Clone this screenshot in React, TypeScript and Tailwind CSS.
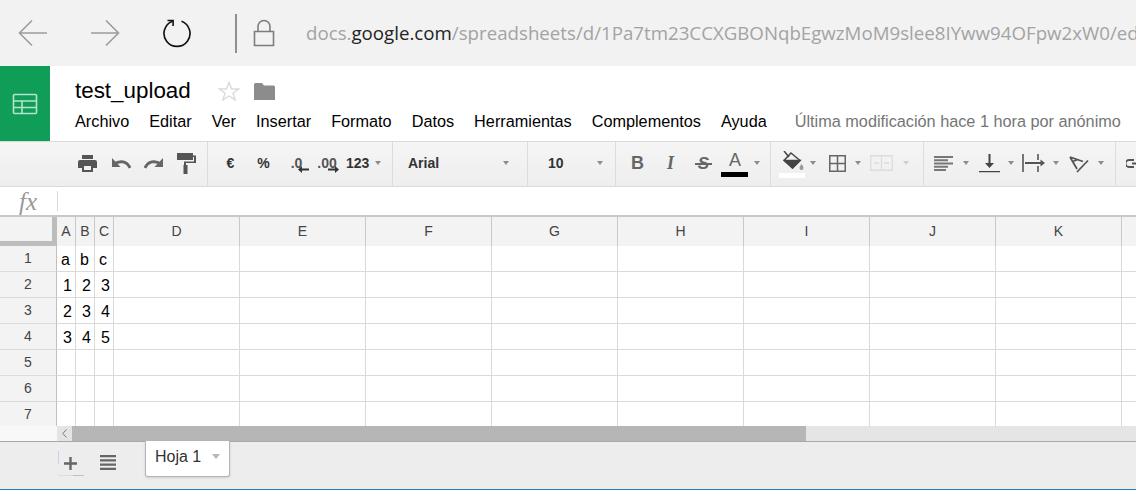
import React from 'react';

const SANS = { fontFamily: '"Liberation Sans", Arial, sans-serif' };
const COLUMNS = [
  { name: 'A', w: 19 },
  { name: 'B', w: 19 },
  { name: 'C', w: 19 },
  { name: 'D', w: 126 },
  { name: 'E', w: 126 },
  { name: 'F', w: 126 },
  { name: 'G', w: 126 },
  { name: 'H', w: 126 },
  { name: 'I', w: 126 },
  { name: 'J', w: 126 },
  { name: 'K', w: 126 },
  { name: '', w: 60 },
];
const ROWS = [
  ['a', 'b', 'c'],
  ['1', '2', '3'],
  ['2', '3', '4'],
  ['3', '4', '5'],
  [],
  [],
  [],
];
const MENUS = ['Archivo', 'Editar', 'Ver', 'Insertar', 'Formato', 'Datos', 'Herramientas', 'Complementos', 'Ayuda'];

const Caret = ({ className = 'border-t-[#8c8c8c]' }: { className?: string }) => (
  <span className={`inline-block w-0 h-0 mr-px shrink-0 border-x-[3px] border-x-transparent border-t-[4px] ${className}`} />
);

const Sep = () => <div className="w-px self-stretch -mb-[2px] bg-[#dcdcdc] shrink-0" />;

const Gap = ({ w }: { w: number }) => <div className="shrink-0" style={{ width: w }} />;

// fixed width toolbar slot, content centered
const Slot = ({ w, children }: { w: number; children: React.ReactNode }) => (
  <div className="flex items-center justify-center shrink-0 h-full" style={{ width: w }}>
    {children}
  </div>
);

const BrowserBar = () => (
  <div className="h-[66px] bg-[#f2f2f2] flex items-center shrink-0 overflow-hidden">
    <svg width="30" height="28" viewBox="0 0 30 28" className="ml-[18px] shrink-0" fill="none" stroke="#9c9c9c" strokeWidth="1.6">
      <path d="M29 14H2M14 1.5 1.500 14 14 26.500" />
    </svg>
    <svg width="30" height="28" viewBox="0 0 30 28" className="ml-[42px] shrink-0" fill="none" stroke="#9c9c9c" strokeWidth="1.6">
      <path d="M1 14h27M16 1.500 28.500 14 16 26.500" />
    </svg>
    <svg width="30" height="30" viewBox="0 0 30 30" className="ml-[42px] shrink-0" fill="none" stroke="#111" strokeWidth="1.6">
      <path d="M10.500 3.200A13 13 0 1 0 19.500 3.200" />
      <path d="M5.500 2.500h5.600v5.600" />
    </svg>
    <div className="w-[2px] h-[39px] bg-[#8f8f8f] ml-[43px] shrink-0" />
    <svg width="22" height="28" viewBox="0 0 22 28" className="ml-[16px] shrink-0" fill="none" stroke="#7d7d7d" strokeWidth="1.6">
      <path d="M1.500 12.500h19v14h-19zM5 12.500V7.500a6 6 0 0 1 12 0v5" />
    </svg>
    <div className="ml-[31px] text-[18.7px] whitespace-nowrap text-[#a3a3a3]" style={{ fontFamily: '"Open Sans", sans-serif' }}>
      docs.<span className="text-[#222]">google.com</span>/spreadsheets/d/1Pa7tm23CCXGBONqbEgwzMoM9slee8IYww94OFpw2xW0/ed
    </div>
  </div>
);

const DocHeader = () => (
  <div className="h-[75px] bg-white flex shrink-0">
    <div className="w-[50px] bg-[#0f9d58] flex items-center justify-center shrink-0">
      <svg width="26" height="22" viewBox="0 0 26 22" fill="none" stroke="#b5e3cb" strokeWidth="1.6">
        <rect x="1.500" y="1.500" width="23" height="19" rx="1" />
        <path d="M1.500 8h23M1.500 14.500h23M10 8v12.500" />
      </svg>
    </div>
    <div className="pl-[25px] flex flex-col min-w-0">
      <div className="flex items-center h-[37px] pt-[13px]">
        <span className="text-[22.4px] leading-none text-black">test_upload</span>
        <svg width="22" height="20" viewBox="0 0 22 20" className="ml-[27px]" fill="none" stroke="#dadada" strokeWidth="1.4">
          <path d="M11 1.500 13.600 8h7l-5.600 4.200 2.100 6.800L11 15l-6.100 4 2.100-6.800L1.400 8h7z" />
        </svg>
        <svg width="21" height="17" viewBox="0 0 21 17" className="ml-[14px]" fill="#8c8c8c">
          <path d="M0 1.500Q0 0 1.500 0H8l2 2.500h9.500Q21 2.500 21 4v13H0z" />
        </svg>
      </div>
      <div className="flex items-center gap-[20px] h-[32px] text-[16.25px] text-black whitespace-nowrap pt-[4px]">
        {MENUS.map(m => (
          <span key={m}>{m}</span>
        ))}
        <span className="text-[#757575] ml-[8px]">Última modificación hace 1 hora por anónimo</span>
      </div>
    </div>
  </div>
);

const Toolbar = () => (
  <div className="h-[46px] shrink-0 border-y border-[#dadada] bg-gradient-to-b from-[#f5f5f5] to-[#eeeeee] flex items-center overflow-hidden pb-[2px] text-[14px] font-bold text-[#333] whitespace-nowrap">
    <Gap w={71} />
    <Slot w={33}>
      <svg width="19" height="17" viewBox="0 0 19 17" fill="#555">
        <path d="M4 0h11v4H4zM2 5h15a2 2 0 0 1 2 2v6h-4v4H4v-4H0V7a2 2 0 0 1 2-2zm4 6v4h7v-4z" />
      </svg>
    </Slot>
    <Slot w={33}>
      <svg width="20" height="12" viewBox="0 0 20 12" fill="none" stroke="#666" strokeWidth="3">
        <path d="M19 11C16 4 9 3 3 7" />
        <path d="M1 1v9h8.500z" fill="#666" stroke="none" />
      </svg>
    </Slot>
    <Slot w={33}>
      <svg width="20" height="12" viewBox="0 0 20 12" fill="none" stroke="#666" strokeWidth="3">
        <path d="M1 11C4 4 11 3 17 7" />
        <path d="M19 1v9h-8.500z" fill="#666" stroke="none" />
      </svg>
    </Slot>
    <Slot w={33}>
      <svg width="19" height="21" viewBox="0 0 19 21" fill="#555">
        <path d="M0 0h16v7H0zM16 2.500h3V10H9v2.500H7V8.500h10V4h-1zM6.500 12h4v9h-4z" />
      </svg>
    </Slot>
    <Gap w={4} />
    <Sep />
    <Gap w={6} />
    <Slot w={33}>€</Slot>
    <Slot w={33}>%</Slot>
    <Slot w={33}>
      <span className="relative text-[#555]">
        .0
        <svg width="11" height="7" viewBox="0 0 11 7" className="absolute left-[7px] top-[13px]" fill="#333">
          <path d="M11 2.500v2H4V7L0 3.500 4 0v2.500z" />
        </svg>
      </span>
    </Slot>
    <Slot w={28}>
      <span className="relative text-[#555]">
        .00
        <svg width="11" height="7" viewBox="0 0 11 7" className="absolute left-[11px] top-[13px]" fill="#333">
          <path d="M0 2.500v2h7V7l4-3.500L7 0v2.500z" />
        </svg>
      </span>
    </Slot>
    <Gap w={5} />
    <span className="w-[29px] shrink-0">123</span>
    <Caret />
    <Gap w={10} />
    <Sep />
    <Gap w={15} />
    <span className="w-[95px] shrink-0">Arial</span>
    <Caret />
    <Gap w={17} />
    <Sep />
    <Gap w={20} />
    <span className="w-[49px] shrink-0">10</span>
    <Caret />
    <Gap w={11} />
    <Sep />
    <Gap w={5} />
    <Slot w={33}>
      <span className="text-[#666] text-[18px] font-bold leading-none">B</span>
    </Slot>
    <Slot w={33}>
      <span className="text-[#666] text-[18px] font-bold italic leading-none" style={{ fontFamily: '"Liberation Serif", serif' }}>I</span>
    </Slot>
    <Slot w={33}>
      <span className="relative text-[#666] text-[17px] font-bold italic leading-none">
        S
        <span className="absolute left-[-3px] right-[-3px] top-[8px] h-[2px] bg-[#666]" />
      </span>
    </Slot>
    <div className="relative w-[30px] h-full flex items-start justify-center shrink-0 pt-[8px]">
      <span className="text-[#666] text-[18px] font-normal leading-[20px]">A</span>
      <div className="absolute left-[1px] top-[30px] w-[27px] h-[5px] bg-black" />
    </div>
    <Gap w={4} />
    <Caret />
    <Gap w={9} />
    <Sep />
    <Gap w={8} />
    <div className="relative w-[27px] h-full shrink-0 flex items-start justify-center pt-[9px]">
      <svg width="22" height="20" viewBox="0 0 22 20" fill="none" stroke="#444" strokeWidth="1.500">
        <path d="M2 0 7 6" />
        <path d="M9 2 18 9.500 10.500 17 2 9.500z" />
        <path d="M3 9.500h15l-7.500 7.500z" fill="#444" />
        <path d="M19.500 13c1 1.500 2 2.700 2 4a2 2 0 0 1-4 0c0-1.300 1-2.500 2-4z" fill="#999" stroke="none" />
      </svg>
      <div className="absolute left-0 top-[31px] w-[26px] h-[5px] bg-white" />
    </div>
    <Gap w={4} />
    <Caret />
    <Gap w={12} />
    <svg width="17" height="17" viewBox="0 0 17 17" className="shrink-0" fill="none" stroke="#666" strokeWidth="1.500">
      <path d="M.750.750h15.500v15.500H.750zM8.500 1v15M1 8.500h15" />
    </svg>
    <Gap w={9} />
    <Caret />
    <Gap w={8} />
    <svg width="23" height="16" viewBox="0 0 23 16" className="shrink-0" fill="none" stroke="#dcdcdc" strokeWidth="1.300">
      <path d="M.750.750h21.500v14.500H.750zM11.500 1v14M4 8h5M19 8h-5" />
    </svg>
    <Gap w={10} />
    <Caret className="border-t-[#cfcfcf]" />
    <Gap w={13} />
    <Sep />
    <Gap w={10} />
    <svg width="19" height="15" viewBox="0 0 19 15" className="shrink-0" fill="#777">
      <path d="M0 0h19v2H0zM0 3.200h14v2H0zM0 6.500h19v2H0zM0 9.700h14v2H0zM0 13h12v2H0z" />
    </svg>
    <Gap w={10} />
    <Caret />
    <Gap w={9} />
    <svg width="21" height="20" viewBox="0 0 21 20" className="shrink-0" fill="#444">
      <path d="M9.500 1h2v9h3.500l-4.500 5L6 10h3.500zM0 18h21v1.300H0z" />
    </svg>
    <Gap w={8} />
    <Caret />
    <Gap w={7} />
    <svg width="24" height="18" viewBox="0 0 24 18" className="shrink-0" fill="none" stroke="#555" strokeWidth="1.600">
      <path d="M1 0v18M16 0v6M16 12v6" />
      <path d="M3 9h16" strokeWidth="2" />
      <path d="m18.500 5.500 4.500 3.500-4.500 3.500z" fill="#555" stroke="none" />
    </svg>
    <Gap w={7} />
    <Caret />
    <Gap w={9} />
    <svg width="20" height="19" viewBox="0 0 20 19" className="shrink-0" fill="none" stroke="#555" strokeWidth="1.800">
      <path d="M1 3 14 7.500M1 3 8 15M3.500 7.500 9 5.500" />
      <path d="M19 6.500 8 18" />
    </svg>
    <Gap w={9} />
    <Caret />
    <Gap w={10} />
    <Sep />
    <Gap w={10} />
    <svg width="14" height="9" viewBox="0 0 14 9" className="shrink-0" fill="none" stroke="#555" strokeWidth="2">
      <path d="M8 1H3a2.500 2.500 0 0 0 0 7h5M6 4.500h8" />
    </svg>
  </div>
);

const FormulaBar = () => (
  <div className="h-[28px] bg-white flex items-center shrink-0">
    <div className="w-[57px] h-full flex items-center justify-center shrink-0 pr-[1px]">
      <span className="text-[25px] leading-none italic text-[#999]" style={{ fontFamily: '"Liberation Serif", serif' }}>fx</span>
    </div>
    <div className="w-px h-[20px] bg-[#d9d9d9]" />
  </div>
);

const Sheet = () => (
  <div className="flex-1 min-h-0 overflow-hidden border-t-2 border-[#c8c8c8] bg-white">
    <div className="flex h-[29px] bg-[#f3f3f3]">
      <div className="w-[57px] shrink-0 border-r-[5px] border-b-[5px] border-[#bdbdbd]" />
      {COLUMNS.map((col, i) => (
        <div
          key={i}
          className="shrink-0 border-r border-[#c9c9c9] flex items-center justify-center text-[14px] text-[#444]"
          style={{ width: col.w }}
        >
          {col.name}
        </div>
      ))}
    </div>
    {ROWS.map((row, r) => (
      <div key={r} className="flex h-[26px]">
        <div className="w-[57px] shrink-0 bg-[#f3f3f3] border-r border-b border-r-[#c0c0c0] border-b-[#dcdcdc] flex items-center justify-center text-[14px] text-[#444]">
          {r + 1}
        </div>
        {COLUMNS.map((col, c) => (
          <div
            key={c}
            className={`shrink-0 border-r border-b border-[#dadada] flex items-center pt-[2px] text-[16px] text-black ${
              r === 0 ? 'justify-start pl-[4px]' : 'justify-end pr-[3px]'
            }`}
            style={{ width: col.w }}
          >
            {row[c]}
          </div>
        ))}
      </div>
    ))}
  </div>
);

const ScrollBar = () => (
  <div className="h-[16px] flex shrink-0 border-b border-[#a8a8a8] bg-[#e5e5e5]">
    <div className="w-[57px] bg-[#f8f8f8] shrink-0" />
    <div className="w-[15px] bg-[#e4e4e4] flex items-center justify-center shrink-0">
      <svg width="5" height="9" viewBox="0 0 5 9" fill="none" stroke="#777">
        <path d="M4.500.500.800 4.500l3.700 4" />
      </svg>
    </div>
    <div className="w-[734px] bg-[#b6b6b6] shrink-0" />
  </div>
);

const SheetBar = () => (
  <div className="h-[48px] shrink-0 bg-[#ededed] border-b border-[#2a7ab8] flex items-start">
    <div className="ml-[58px] mt-[9px] w-[26px] h-[25px] pr-[2px] flex items-center justify-center shrink-0 relative">
      <svg width="13" height="13" viewBox="0 0 13 13" fill="#666">
        <path d="M5.300 0h2.400v5.300H13v2.400H7.700V13H5.300V7.700H0V5.300h5.300z" />
      </svg>
      <div className="absolute left-0 top-0 w-px h-[13px] bg-[#c9cff0]" />
      <div className="absolute left-0 top-[24px] w-[15px] h-px bg-[#dcdcdc]" />
      <div className="absolute left-[15px] top-[24px] w-[11px] h-px bg-[#a6d4a8]" />
    </div>
    <svg width="16" height="15" viewBox="0 0 16 15" className="ml-[16px] mt-[13px] shrink-0" fill="#666">
      <path d="M0 0h16v2.200H0zM0 4.200h16v2.200H0zM0 8.500h16v2.200H0zM0 12.800h16V15H0z" />
    </svg>
    <div className="ml-[29px] -mt-px w-[85px] h-[36px] bg-white border border-t-0 border-[#b5b5b5] rounded-b-[3px] shadow-sm flex items-center shrink-0 pl-[9px] pb-[4px] text-[16px] text-[#333]">
      <span className="w-[57px]">Hoja 1</span>
      <span className="inline-block w-0 h-0 border-x-[4px] border-x-transparent border-t-[5px] border-t-[#b8b8b8]" />
    </div>
  </div>
);

export default function App() {
  return (
    <div className="w-[1136px] h-[490px] flex flex-col overflow-hidden bg-white" style={SANS}>
      <BrowserBar />
      <DocHeader />
      <Toolbar />
      <FormulaBar />
      <Sheet />
      <ScrollBar />
      <SheetBar />
    </div>
  );
}
